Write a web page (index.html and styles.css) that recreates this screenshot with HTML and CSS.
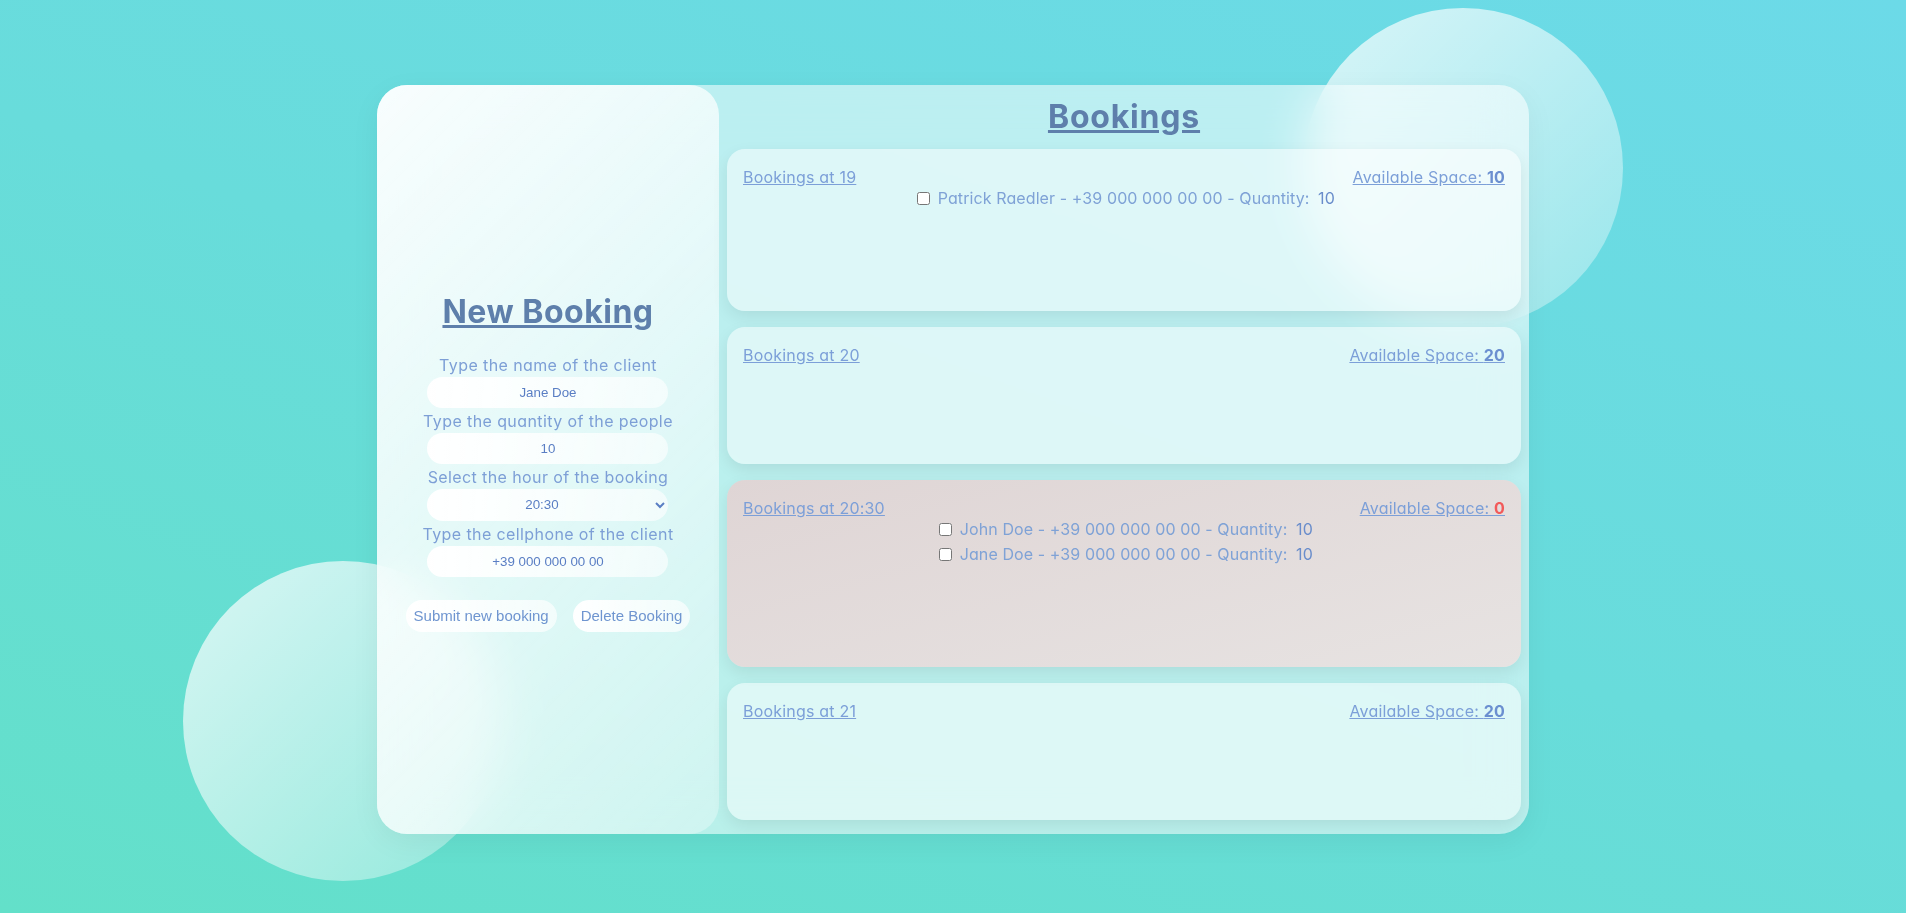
FILE: index.html
```html
<!DOCTYPE html>
<html lang="en">
<head>
    <meta charset="UTF-8">
    <meta name="viewport" content="width=device-width, initial-scale=1.0">
    <title>Bookings</title>
    <link rel="stylesheet" href="styles.css">
</head>
<body>
    <div class="bubble bubble-top"></div>
    <div class="bubble bubble-bottom"></div>

    <main class="app">
        <section class="new-booking">
            <h2 class="panel-title">New Booking</h2>
            <form class="booking-form">
                <label for="client-name">Type the name of the client</label>
                <input type="text" id="client-name" value="Jane Doe">

                <label for="client-quantity">Type the quantity of the people</label>
                <input type="number" id="client-quantity" value="10">

                <label for="booking-hour">Select the hour of the booking</label>
                <select id="booking-hour">
                    <option>19</option>
                    <option>20</option>
                    <option selected>20:30</option>
                    <option>21</option>
                </select>

                <label for="client-phone">Type the cellphone of the client</label>
                <input type="text" id="client-phone" value="+39 000 000 00 00">

                <div class="form-buttons">
                    <button type="submit">Submit new booking</button>
                    <button type="button">Delete Booking</button>
                </div>
            </form>
        </section>

        <section class="bookings">
            <h1 class="bookings-title">Bookings</h1>

            <div class="slot">
                <div class="slot-header">
                    <u>Bookings at 19</u>
                    <u>Available Space: <b>10</b></u>
                </div>
                <ul class="slot-list">
                    <li><input type="checkbox"> Patrick Raedler - +39 000 000 00 00 - Quantity: <span class="qty">10</span></li>
                </ul>
            </div>

            <div class="slot">
                <div class="slot-header">
                    <u>Bookings at 20</u>
                    <u>Available Space: <b>20</b></u>
                </div>
                <ul class="slot-list"></ul>
            </div>

            <div class="slot slot-full">
                <div class="slot-header">
                    <u>Bookings at 20:30</u>
                    <u>Available Space: <b>0</b></u>
                </div>
                <ul class="slot-list">
                    <li><input type="checkbox"> John Doe - +39 000 000 00 00 - Quantity: <span class="qty">10</span></li>
                    <li><input type="checkbox"> Jane Doe - +39 000 000 00 00 - Quantity: <span class="qty">10</span></li>
                </ul>
            </div>

            <div class="slot">
                <div class="slot-header">
                    <u>Bookings at 21</u>
                    <u>Available Space: <b>20</b></u>
                </div>
                <ul class="slot-list"></ul>
            </div>
        </section>
    </main>
</body>
</html>
```

FILE: styles.css
```css
body {
    margin: 0;
    height: 913px;
    padding-top: 85px;
    box-sizing: border-box;
    position: relative;
    overflow: hidden;
    font-family: Inter, "Noto Sans", sans-serif;
    font-feature-settings: "cv11";
    color: #7d9fd6;
    background: linear-gradient(20deg, #63e0c9 0%, #68dcdb 50%, #6cdae8 100%);
}

/* background circles */
.bubble {
    position: absolute;
    width: 320px;
    height: 320px;
    border-radius: 50%;
    background: linear-gradient(135deg, rgba(255, 255, 255, 0.75), rgba(255, 255, 255, 0.3));
}

.bubble-top {
    left: 1303px;
    top: 8px;
}

.bubble-bottom {
    left: 183px;
    top: 561px;
}

.app {
    position: relative;
    display: flex;
    width: 1152px;
    height: 749px;
    margin: 0 auto;
    border-radius: 30px;
    background: rgba(255, 255, 255, 0.55);
    backdrop-filter: blur(24px);
    box-shadow: 0 8px 30px rgba(0, 0, 0, 0.05);
}

/* left panel */
.new-booking {
    width: 342px;
    flex-shrink: 0;
    display: flex;
    flex-direction: column;
    justify-content: center;
    align-items: center;
    border-radius: 30px;
    background: linear-gradient(135deg, rgba(255, 255, 255, 0.9), rgba(255, 255, 255, 0.3));
}

.panel-title {
    margin: 0 0 17px;
    font-size: 32px;
    line-height: 48px;
    font-weight: 700;
    letter-spacing: 0.5px;
    color: #5e7fab;
    text-decoration: underline;
}

.booking-form {
    display: flex;
    flex-direction: column;
    align-items: center;
}

.booking-form label {
    display: block;
    font-size: 16px;
    line-height: 24px;
    letter-spacing: 0.4px;
    text-align: center;
}

.booking-form input,
.booking-form select {
    box-sizing: border-box;
    width: 241px;
    height: 31px;
    margin: 0 0 1px;
    border: none;
    border-radius: 16px;
    background: linear-gradient(to right, #ffffff, rgba(255, 255, 255, 0.6));
    font-family: "Liberation Sans", Arial, sans-serif;
    font-size: 13.33px;
    color: #5a7ec4;
    text-align: center;
    text-align-last: center;
    outline: none;
}

.booking-form select {
    height: 32px;
}

.booking-form input[type="number"] {
    -moz-appearance: textfield;
}

.booking-form input[type="number"]::-webkit-inner-spin-button {
    -webkit-appearance: none;
}

.form-buttons {
    display: flex;
    gap: 16px;
    margin-top: 22px;
}

.form-buttons button {
    height: 32px;
    padding: 0 8px;
    border: none;
    border-radius: 16px;
    background: linear-gradient(to right, #ffffff, rgba(255, 255, 255, 0.65));
    font-family: "Liberation Sans", Arial, sans-serif;
    font-size: 15px;
    color: #6f95d0;
    cursor: pointer;
}

/* right side */
.bookings {
    flex: 1;
    display: flex;
    flex-direction: column;
    gap: 16px;
    padding: 0 8px;
}

.bookings-title {
    margin: 0 0 -16px;
    font-size: 32px;
    line-height: 64px;
    font-weight: 700;
    letter-spacing: 0.8px;
    color: #5e7fab;
    text-align: center;
    text-decoration: underline;
}

.slot {
    padding: 16px 16px 100px;
    border-radius: 18px;
    background: rgba(255, 255, 255, 0.5);
    box-shadow: 0 6px 16px rgba(0, 0, 0, 0.08);
    font-size: 16px;
    letter-spacing: 0.2px;
}

.slot-full {
    background: linear-gradient(165deg, #dfd5d5, #e7e3e2);
}

.slot-header {
    display: flex;
    justify-content: space-between;
    line-height: 24px;
    color: #7c9fd8;
}

.slot-header b {
    color: #6b8fd0;
}

.slot-full .slot-header b {
    color: #f25a5a;
}

.slot-list {
    list-style: none;
    margin: -3px 0 0;
    padding: 0;
    line-height: 25px;
    letter-spacing: 0.1px;
    text-align: center;
    color: #7fa2d6;
}

.slot-list input {
    margin: 0 3px 0 4px;
    vertical-align: -1px;
}

.qty {
    margin-left: 4px;
    color: #6a8dcb;
}
```
